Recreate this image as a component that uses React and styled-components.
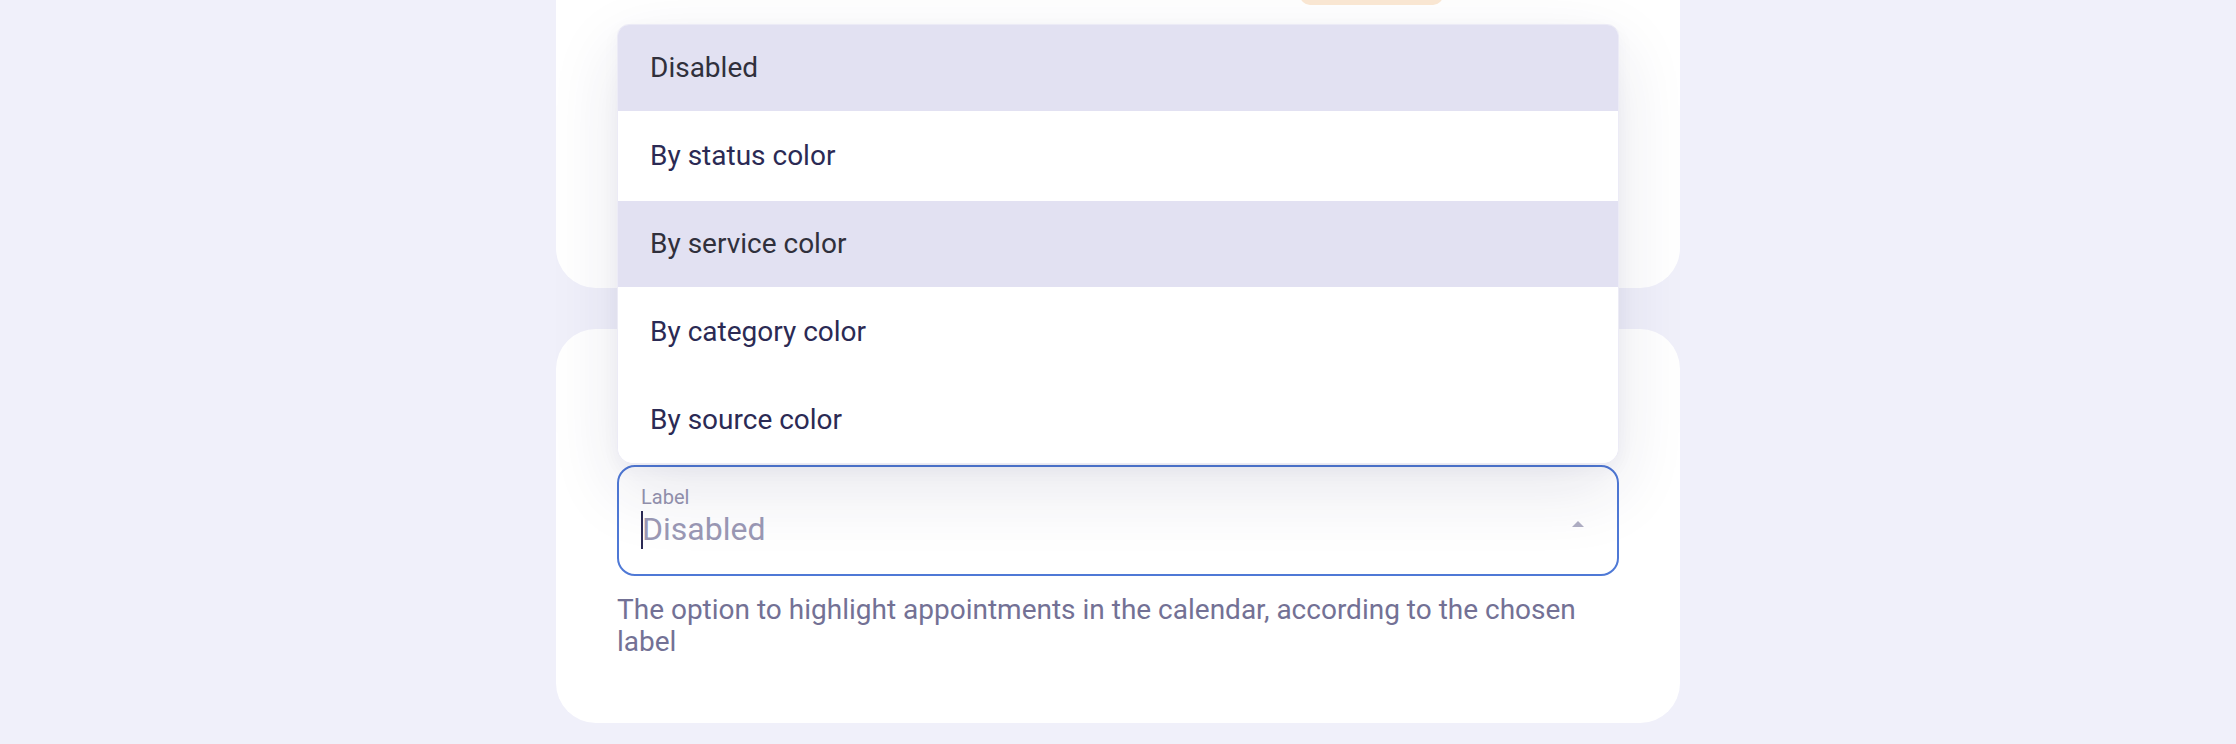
import React from "react";
import styled, { createGlobalStyle } from "styled-components";

const Global = createGlobalStyle`
  html, body { margin: 0; padding: 0; }
  body {
    background: #f0f0fa;
    font-family: Roboto, "Liberation Sans", Arial, sans-serif;
    overflow: hidden;
  }
  * { box-sizing: border-box; }
`;

const Page = styled.div`
  min-height: 744px;
  height: 744px;
  display: flex;
  justify-content: center;
  background: #f0f0fa;
  overflow: hidden;
`;

const Column = styled.div`
  width: 1124px;
  margin-top: -60px;
  display: flex;
  flex-direction: column;
  gap: 41px;
`;

const Card = styled.section`
  background: #ffffff;
  border-radius: 40px;
  padding: ${(p) => p.$pad};
  height: ${(p) => (p.$height ? `${p.$height}px` : "auto")};
  display: flex;
  flex-direction: column;
`;

const ChipRow = styled.div`
  display: flex;
  justify-content: flex-end;
  padding-right: 176px;
`;

const Chip = styled.div`
  width: 143px;
  height: 40px;
  border-radius: 10px;
  background: #fbe8d4;
`;

const SelectWrap = styled.div`
  position: relative;
`;

const Field = styled.div`
  height: 111px;
  border: 2px solid #4f79d6;
  border-radius: 18px;
  padding: 18px 22px 0 22px;
  display: flex;
  align-items: center;
`;

const FieldBody = styled.div`
  flex: 1;
  display: flex;
  flex-direction: column;
  align-self: flex-start;
`;

const FieldLabel = styled.span`
  font-size: 20px;
  line-height: 24px;
  color: #9593ae;
`;

const ValueRow = styled.div`
  display: flex;
  align-items: center;
  height: 40px;
`;

const Caret = styled.span`
  width: 2px;
  height: 38px;
  background: #2b2a55;
  margin-right: -1px;
  margin-top: 2px;
`;

const Value = styled.span`
  font-size: 32px;
  line-height: 40px;
  color: #9b99b5;
`;

const Arrow = styled.svg`
  width: 12px;
  height: 6px;
  margin-right: 11px;
  margin-top: -12px;
  flex: none;
`;

const Menu = styled.ul`
  position: absolute;
  left: 0;
  right: 0;
  bottom: calc(100% + 1px);
  margin: 0;
  padding: 0;
  list-style: none;
  background: #ffffff;
  border: 1px solid #ecebf6;
  border-radius: 12px 12px 16px 16px;
  overflow: hidden;
  display: flex;
  flex-direction: column;
  gap: 2px;
  z-index: 5;
  box-shadow: 0 26px 70px rgba(40, 40, 90, 0.11), 0 6px 18px rgba(40, 40, 90, 0.04);
`;

const Item = styled.li`
  height: 86px;
  display: flex;
  align-items: center;
  padding: 0 0 2px 32px;
  font-size: 28px;
  color: ${(p) => (p.$active ? "#30303c" : "#2b2a54")};
  background: ${(p) => (p.$active ? "#e2e1f2" : "#ffffff")};
`;

const Helper = styled.p`
  margin: 18px 0 0;
  font-size: 28px;
  line-height: 32px;
  color: #737195;
`;

const options = [
  { label: "Disabled", active: true },
  { label: "By status color" },
  { label: "By service color", active: true },
  { label: "By category color" },
  { label: "By source color" },
];

export default function App() {
  return (
    <>
      <Global />
      <Page>
        <Column>
          <Card $pad="25px 61px 0" $height={348}>
            <ChipRow>
              <Chip />
            </ChipRow>
          </Card>
          <Card $pad="136px 61px 65px">
            <SelectWrap>
              <Menu role="listbox">
                {options.map((o) => (
                  <Item key={o.label} $active={o.active}>
                    {o.label}
                  </Item>
                ))}
              </Menu>
              <Field>
                <FieldBody>
                  <FieldLabel>Label</FieldLabel>
                  <ValueRow>
                    <Caret />
                    <Value>Disabled</Value>
                  </ValueRow>
                </FieldBody>
                <Arrow viewBox="0 0 12 6">
                  <path d="M0 6 L6 0 L12 6 Z" fill="#b0afc4" />
                </Arrow>
              </Field>
            </SelectWrap>
            <Helper>
              The option to highlight appointments in the calendar, according to the chosen label
            </Helper>
          </Card>
        </Column>
      </Page>
    </>
  );
}
